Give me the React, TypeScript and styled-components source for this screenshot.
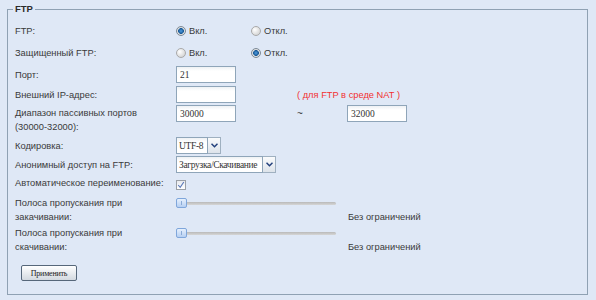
import styled, { createGlobalStyle } from "styled-components";

const GlobalStyle = createGlobalStyle`
  body {
    margin: 0;
    background: #dfe8f6;
    font-family: "Liberation Sans", Arial, sans-serif;
  }
`;

const Fieldset = styled.fieldset`
  margin: 2px 8px 0 7px;
  padding: 0 7px 13px 7px;
  border: 1px solid #8fa1b3;
  min-width: 0;
`;

const Legend = styled.legend`
  margin-left: -2px;
  padding: 0 2px;
  font-size: 9.5px;
  font-weight: bold;
  line-height: 14px;
  color: #2b2b2b;
`;

const Row = styled.div<{ $h: number; $mt?: number; $top?: boolean }>`
  display: flex;
  align-items: ${(p) => (p.$top ? "flex-start" : "center")};
  height: ${(p) => p.$h}px;
  margin-top: ${(p) => p.$mt ?? 0}px;
`;

const Label = styled.div<{ $pt?: number }>`
  width: 161px;
  flex-shrink: 0;
  padding-top: ${(p) => p.$pt ?? 0}px;
  font-size: 9.3px;
  line-height: 14px;
  color: #3a3a3a;
`;

const Text = styled.span<{ $ml?: number; $red?: boolean }>`
  margin-left: ${(p) => p.$ml ?? 0}px;
  font-size: 9.3px;
  line-height: 14px;
  color: ${(p) => (p.$red ? "#f23030" : "#3a3a3a")};
`;

const Option = styled.label`
  display: flex;
  align-items: center;
  width: 75px;
  gap: 3px;
  font-size: 9.3px;
  color: #3a3a3a;
`;

const Radio = styled.span<{ $on?: boolean }>`
  width: 10px;
  height: 10px;
  box-sizing: border-box;
  border-radius: 50%;
  border: 1px solid ${(p) => (p.$on ? "#7d8a96" : "#a9a9a9")};
  background: ${(p) =>
    p.$on
      ? "radial-gradient(circle at 50% 50%, #4d9be0 0, #1b5a96 2.6px, #e6e6e6 3.2px, #c4c4c4 100%)"
      : "radial-gradient(circle at 35% 35%, #ffffff 0, #e4e4e4 50%, #c9c9c9 100%)"};
`;

const Input = styled.input<{ $mt?: number }>`
  width: 60px;
  height: 17px;
  box-sizing: border-box;
  margin: ${(p) => p.$mt ?? 0}px 0 0 0;
  padding: 0 3px;
  border: 1px solid #8fa5b9;
  background: linear-gradient(#eef1f4 0, #ffffff 4px);
  font-family: "Liberation Serif", "Times New Roman", serif;
  font-size: 9.5px;
  color: #333;
  outline: none;
`;

const Tilde = styled.span`
  width: 50px;
  margin: 4px 0 0 61px;
  font-size: 10px;
  color: #3a3a3a;
`;

const Combo = styled.div<{ $w: number }>`
  display: flex;
  width: ${(p) => p.$w}px;
  height: 17px;
`;

const ComboField = styled.div`
  flex: 1;
  min-width: 0;
  display: flex;
  align-items: center;
  padding: 0 2px;
  border: 1px solid #8fa5b9;
  background: linear-gradient(#eef1f4 0, #ffffff 4px);
  font-family: "Liberation Serif", "Times New Roman", serif;
  font-size: 9.5px;
  letter-spacing: -0.35px;
  color: #333;
  white-space: nowrap;
  overflow: hidden;
`;

const Trigger = styled.div`
  width: 12px;
  display: flex;
  align-items: center;
  justify-content: center;
  border: 1px solid #9fb0c0;
  border-left: none;
  background: linear-gradient(#fafbfc, #dde3ea);
`;

const Check = styled.span`
  width: 10px;
  height: 10px;
  box-sizing: border-box;
  margin-top: 4px;
  display: flex;
  align-items: center;
  justify-content: center;
  border: 1px solid #9a9fa6;
  background: linear-gradient(#e8eaee, #ffffff);
`;

const SliderCell = styled.div`
  display: flex;
  align-self: stretch;
`;

const Slider = styled.div`
  position: relative;
  width: 160px;
  height: 14px;
  display: flex;
  align-items: center;
`;

const Track = styled.div`
  width: 100%;
  height: 3px;
  border-radius: 2px;
  background: linear-gradient(#b9b9b9, #d6d6d6);
`;

const Thumb = styled.div`
  position: absolute;
  left: 0;
  top: 2px;
  width: 11px;
  height: 10px;
  box-sizing: border-box;
  border: 1px solid #7fa6db;
  border-radius: 2px;
  background: linear-gradient(#e6f0fd, #b6cff2);

  &::after {
    content: "";
    position: absolute;
    left: 4px;
    top: 2px;
    width: 1px;
    height: 4px;
    background: #8aaad6;
  }
`;

const Value = styled.span`
  align-self: flex-end;
  margin-left: 12px;
  font-size: 9.3px;
  line-height: 14px;
  color: #3a3a3a;
`;

const Button = styled.button`
  width: 56px;
  height: 16px;
  margin: 11px 0 0 6px;
  padding: 0;
  border: 1px solid #56677a;
  border-radius: 2px;
  background: linear-gradient(#ffffff, #d3d9e0);
  font-family: "Liberation Serif", "Times New Roman", serif;
  font-size: 8px;
  letter-spacing: -0.2px;
  color: #222;
`;

const Chevron = () => (
  <svg width="7" height="5" viewBox="0 0 7 5">
    <path d="M0.5 0.8 L3.5 3.8 L6.5 0.8" fill="none" stroke="#24417c" strokeWidth="1.5" />
  </svg>
);

const Tick = () => (
  <svg width="8" height="8" viewBox="0 0 8 8">
    <path d="M1.2 4 L3.2 6.4 L6.8 1" fill="none" stroke="#5a78b8" strokeWidth="1.1" />
  </svg>
);

const RadioPair = ({ on }: { on: boolean }) => (
  <>
    <Option>
      <Radio $on={on} />
      Вкл.
    </Option>
    <Option>
      <Radio $on={!on} />
      Откл.
    </Option>
  </>
);

const BandRow = ({ label, mt }: { label: string; mt: number }) => (
  <Row $h={28} $mt={mt} $top>
    <Label>{label}</Label>
    <SliderCell>
      <Slider>
        <Track />
        <Thumb />
      </Slider>
      <Value>Без ограничений</Value>
    </SliderCell>
  </Row>
);

export default function App() {
  return (
    <>
      <GlobalStyle />
      <Fieldset>
        <Legend>FTP</Legend>
        <Row $h={20} $mt={5}>
          <Label>FTP:</Label>
          <RadioPair on />
        </Row>
        <Row $h={20} $mt={2}>
          <Label>Защищенный FTP:</Label>
          <RadioPair on={false} />
        </Row>
        <Row $h={19} $mt={2}>
          <Label>Порт:</Label>
          <Input defaultValue="21" />
        </Row>
        <Row $h={19} $mt={1}>
          <Label>Внешний IP-адрес:</Label>
          <Input defaultValue="" />
          <Text $ml={61} $red>
            ( для FTP в среде NAT )
          </Text>
        </Row>
        <Row $h={32} $top>
          <Label $pt={2}>
            Диапазон пассивных портов
            <br />
            (30000-32000):
          </Label>
          <Input defaultValue="30000" $mt={1} />
          <Tilde>~</Tilde>
          <Input defaultValue="32000" $mt={1} />
        </Row>
        <Row $h={19}>
          <Label>Кодировка:</Label>
          <Combo $w={45}>
            <ComboField>UTF-8</ComboField>
            <Trigger>
              <Chevron />
            </Trigger>
          </Combo>
        </Row>
        <Row $h={19}>
          <Label>Анонимный доступ на FTP:</Label>
          <Combo $w={100}>
            <ComboField>Загрузка/Скачивание</ComboField>
            <Trigger>
              <Chevron />
            </Trigger>
          </Combo>
        </Row>
        <Row $h={18}>
          <Label>Автоматическое переименование:</Label>
          <Check>
            <Tick />
          </Check>
        </Row>
        <BandRow label="Полоса пропускания при закачивании:" mt={4} />
        <BandRow label="Полоса пропускания при скачивании:" mt={2} />
        <Button>Применить</Button>
      </Fieldset>
    </>
  );
}
